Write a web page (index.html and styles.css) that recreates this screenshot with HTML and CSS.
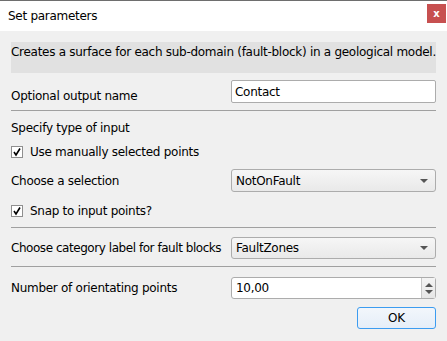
FILE: index.html
```html
<!DOCTYPE html>
<html>
<head>
  <meta charset="UTF-8">
  <title>Set parameters</title>
  <link rel="stylesheet" href="styles.css">
</head>
<body>
  <div class="dialog">
    <div class="title-bar">
      <span class="title">Set parameters</span>
      <button class="close-button">x</button>
    </div>

    <div class="content">
      <div class="description">Creates a surface for each sub-domain (fault-block) in a geological model.</div>

      <div class="form-row row-name">
        <label class="field-label">Optional output name</label>
        <input type="text" class="text-input" value="Contact">
      </div>

      <div class="separator sep-1"></div>

      <div class="plain-row row-specify">Specify type of input</div>

      <div class="check-row row-manual">
        <span class="checkbox"><svg width="10" height="10" viewBox="0 0 10 10"><path d="M2 5 L4 8 L8 1.5" fill="none" stroke="#000" stroke-width="1.6"/></svg></span>
        <span>Use manually selected points</span>
      </div>

      <div class="form-row row-selection">
        <label class="field-label">Choose a selection</label>
        <div class="combo"><span>NotOnFault</span><span class="combo-arrow"></span></div>
      </div>

      <div class="check-row row-snap">
        <span class="checkbox"><svg width="10" height="10" viewBox="0 0 10 10"><path d="M2 5 L4 8 L8 1.5" fill="none" stroke="#000" stroke-width="1.6"/></svg></span>
        <span>Snap to input points?</span>
      </div>

      <div class="separator sep-2"></div>

      <div class="form-row row-category">
        <label class="field-label">Choose category label for fault blocks</label>
        <div class="combo"><span>FaultZones</span><span class="combo-arrow"></span></div>
      </div>

      <div class="separator sep-3"></div>

      <div class="form-row row-points">
        <label class="field-label">Number of orientating points</label>
        <div class="spinbox">
          <span class="spin-value">10,00</span>
          <span class="spin-buttons">
            <span class="spin-up"></span>
            <span class="spin-down"></span>
          </span>
        </div>
      </div>

      <div class="button-row">
        <button class="ok-button">OK</button>
      </div>
    </div>
  </div>
</body>
</html>
```

FILE: styles.css
```css
html, body {
  margin: 0;
  padding: 0;
}

body {
  width: 447px;
  height: 341px;
  overflow: hidden;
  font-family: 'DejaVu Sans', Tahoma, sans-serif;
  font-size: 12px;
  letter-spacing: -0.28px;
  color: #000;
  background-color: #f0f0f0;
}

.dialog {
  height: 341px;
  border-top: 1px solid #6e6e6e;
  box-sizing: border-box;
}

.title-bar {
  height: 30px;
  background-color: #fff;
  display: flex;
  align-items: center;
  justify-content: space-between;
  padding-left: 8px;
  padding-right: 1px;
}

.title {
  font-size: 12px;
  margin-top: -1px;
}

.close-button {
  width: 19px;
  height: 19px;
  margin-top: -6px;
  border: none;
  padding: 0;
  background-color: #c75050;
  color: #fff;
  font-family: 'DejaVu Sans', sans-serif;
  font-weight: bold;
  font-size: 10px;
  letter-spacing: 0;
  line-height: 17px;
}

.content {
  padding: 0 11px;
}

.description {
  margin-top: 11px;
  height: 31px;
  background-color: #e1e1e1;
  line-height: 20px;
  white-space: nowrap;
}

.form-row {
  display: flex;
  justify-content: space-between;
  align-items: center;
}

.field-label {
  line-height: 16px;
  white-space: nowrap;
}

.row-name {
  margin-top: 7px;
  height: 24px;
  align-items: flex-end;
}

.text-input {
  width: 205px;
  height: 23px;
  box-sizing: border-box;
  border: 1px solid #acacac;
  border-radius: 2px;
  padding: 0 3px;
  font-family: inherit;
  font-size: 12px;
  letter-spacing: -0.28px;
  color: #000;
  background-color: #fff;
  align-self: flex-start;
}

.separator {
  height: 1px;
  background-color: #a0a0a0;
}

.sep-1 { margin-top: 6px; }
.sep-2 { margin-top: 8px; }
.sep-3 { margin-top: 7px; }

.plain-row {
  line-height: 16px;
}

.row-specify { margin-top: 9px; }

.check-row {
  display: flex;
  align-items: center;
  gap: 7px;
  height: 16px;
}

.row-manual { margin-top: 8px; }
.row-snap { margin-top: 11px; }

.checkbox {
  width: 10px;
  height: 10px;
  border: 1px solid #8f8f8f;
  background-color: #fff;
  display: flex;
  align-items: center;
  justify-content: center;
}

.row-selection {
  margin-top: 9px;
  height: 23px;
}

.row-category {
  margin-top: 9px;
  height: 22px;
}

.row-category .field-label {
  letter-spacing: -0.45px;
}

.row-points {
  margin-top: 10px;
  height: 22px;
}

.combo {
  width: 205px;
  height: 100%;
  box-sizing: border-box;
  border: 1px solid #acacac;
  border-radius: 3px;
  background: linear-gradient(#f6f6f6, #e9e9e9);
  display: flex;
  align-items: center;
  justify-content: space-between;
  padding: 0 7px 0 4px;
  flex-shrink: 0;
}

.combo-arrow {
  width: 0;
  height: 0;
  border-left: 4px solid transparent;
  border-right: 4px solid transparent;
  border-top: 4px solid #555;
}

.spinbox {
  width: 205px;
  height: 100%;
  box-sizing: border-box;
  border: 1px solid #acacac;
  border-radius: 3px;
  background-color: #fff;
  display: flex;
  align-items: center;
  justify-content: space-between;
}

.spin-value {
  padding-left: 4px;
}

.spin-buttons {
  width: 13px;
  height: 100%;
  border-left: 1px solid #c8c8c8;
  background: linear-gradient(#f4f4f4, #e6e6e6);
  display: flex;
  flex-direction: column;
  align-items: center;
  justify-content: center;
  gap: 3px;
}

.spin-up {
  width: 0;
  height: 0;
  border-left: 4px solid transparent;
  border-right: 4px solid transparent;
  border-bottom: 4px solid #555;
}

.spin-down {
  width: 0;
  height: 0;
  border-left: 4px solid transparent;
  border-right: 4px solid transparent;
  border-top: 4px solid #555;
}

.button-row {
  display: flex;
  justify-content: flex-end;
  margin-top: 8px;
}

.ok-button {
  width: 79px;
  height: 22px;
  border: 1px solid #3c9cf0;
  border-radius: 3px;
  background: linear-gradient(#f2f6fb, #e5eef8);
  font-family: inherit;
  font-size: 12px;
  letter-spacing: -0.28px;
  color: #000;
  padding: 0;
}
```
